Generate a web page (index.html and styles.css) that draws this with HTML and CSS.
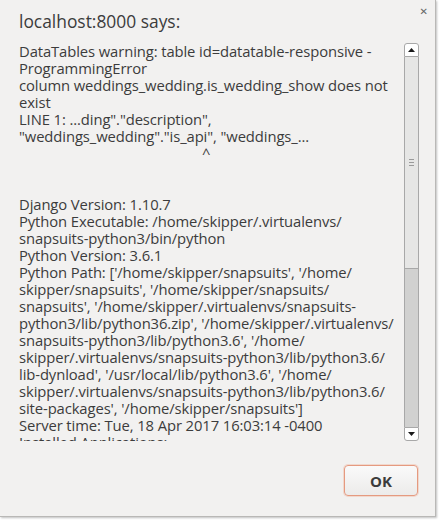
FILE: index.html
```html
<!DOCTYPE html>
<html>
<head>
<meta charset="utf-8">
<link rel="stylesheet" href="styles.css">
</head>
<body>
<div class="dialog">
  <div class="header">
    <div class="title">localhost:8000 says:</div>
    <div class="close">&#x2715;</div>
  </div>
  <div class="content">
    <div class="message">DataTables warning: table id=datatable-responsive -<br>ProgrammingError<br>column weddings_wedding.is_wedding_show does not<br>exist<br>LINE 1: ...ding"."description",<br>"weddings_wedding"."is_api", "weddings_...<br><span class="caret">^</span><br><br><br>Django Version: 1.10.7<br>Python Executable: /home/skipper/.virtualenvs/<br>snapsuits-python3/bin/python<br>Python Version: 3.6.1<br>Python Path: ['/home/skipper/snapsuits', '/home/<br>skipper/snapsuits', '/home/skipper/snapsuits/<br>snapsuits', '/home/skipper/.virtualenvs/snapsuits-<br>python3/lib/python36.zip', '/home/skipper/.virtualenvs/<br>snapsuits-python3/lib/python3.6', '/home/<br>skipper/.virtualenvs/snapsuits-python3/lib/python3.6/<br>lib-dynload', '/usr/local/lib/python3.6', '/home/<br>skipper/.virtualenvs/snapsuits-python3/lib/python3.6/<br>site-packages', '/home/skipper/snapsuits']<br>Server time: Tue, 18 Apr 2017 16:03:14 -0400<br>Installed Applications:</div>
    <div class="scrollbar">
      <div class="sb-btn sb-up"><svg width="7" height="4" viewBox="0 0 7 4"><path d="M0 4 L3.5 0 L7 4 Z" fill="#1a1a1a"/></svg></div>
      <div class="sb-thumb"><span class="grip"></span></div>
      <div class="sb-track"></div>
      <div class="sb-btn sb-down"><svg width="7" height="4" viewBox="0 0 7 4"><path d="M0 0 L3.5 4 L7 0 Z" fill="#1a1a1a"/></svg></div>
    </div>
  </div>
  <div class="footer">
    <button class="ok">OK</button>
  </div>
</div>
</body>
</html>
```
FILE: styles.css
```css
html, body {
  margin: 0;
  padding: 0;
  background: #ffffff;
}
body {
  width: 440px;
  height: 525px;
  overflow: hidden;
  font-family: "Open Sans", "DejaVu Sans", sans-serif;
  color: #3c3c3c;
}
.dialog {
  width: 436px;
  height: 517px;
  background: #f2f1f0;
  border-right: 1px solid #b9b8b6;
  border-bottom: 1px solid #b9b8b6;
  box-shadow: 1px 1px 2px rgba(0,0,0,0.25);
  box-sizing: border-box;
  display: flex;
  flex-direction: column;
}
.header {
  display: flex;
  justify-content: space-between;
  padding: 9px 7px 0 19px;
  height: 34px;
  box-sizing: border-box;
}
.title {
  font-size: 17.4px;
  line-height: 24px;
  color: #3c3c3c;
}
.close {
  font-size: 10px;
  font-weight: bold;
  color: #666;
  line-height: 10px;
  margin-top: -3px;
}
.content {
  display: flex;
  padding-left: 19px;
  margin-top: 9px;
  height: 398px;
}
.message {
  width: 385px;
  height: 398px;
  overflow: hidden;
  font-size: 14.8px;
  line-height: 17px;
  white-space: nowrap;
  letter-spacing: -0.1px;
}
.caret {
  padding-left: 183px;
}
.scrollbar {
  width: 15px;
  height: 398px;
  display: flex;
  flex-direction: column;
  box-sizing: border-box;
}
.sb-btn {
  height: 14px;
  background: #ffffff;
  border: 1px solid #a8a8a8;
  box-sizing: border-box;
  display: flex;
  align-items: center;
  justify-content: center;
}
.sb-up {
  border-radius: 3px 3px 0 0;
}
.sb-down {
  border-radius: 0 0 3px 3px;
}
.sb-thumb {
  height: 212px;
  background: #e6e6e5;
  border-left: 1px solid #a8a8a8;
  border-right: 1px solid #a8a8a8;
  border-bottom: 1px solid #a8a8a8;
  box-sizing: border-box;
  display: flex;
  align-items: center;
  justify-content: center;
}
.grip {
  width: 5px;
  height: 5px;
  border-top: 1px solid #9a9a9a;
  border-bottom: 1px solid #9a9a9a;
  background: linear-gradient(#9a9a9a, #9a9a9a) center / 5px 1px no-repeat;
}
.sb-track {
  flex: 1;
  background: #d1d1d0;
  border-left: 1px solid #a8a8a8;
  border-right: 1px solid #a8a8a8;
  box-sizing: border-box;
}
.footer {
  display: flex;
  justify-content: flex-end;
  padding: 24px 17px 0 0;
}
.ok {
  width: 74px;
  height: 31px;
  border: 1px solid #e59a80;
  border-radius: 4px;
  background: linear-gradient(#fafafa, #ecebea);
  box-shadow: 0 0 0 1px rgba(240,170,140,0.35);
  font-family: "Open Sans", "DejaVu Sans", sans-serif;
  font-weight: bold;
  font-size: 15px;
  color: #3c3c3c;
  padding: 0;
}
```
